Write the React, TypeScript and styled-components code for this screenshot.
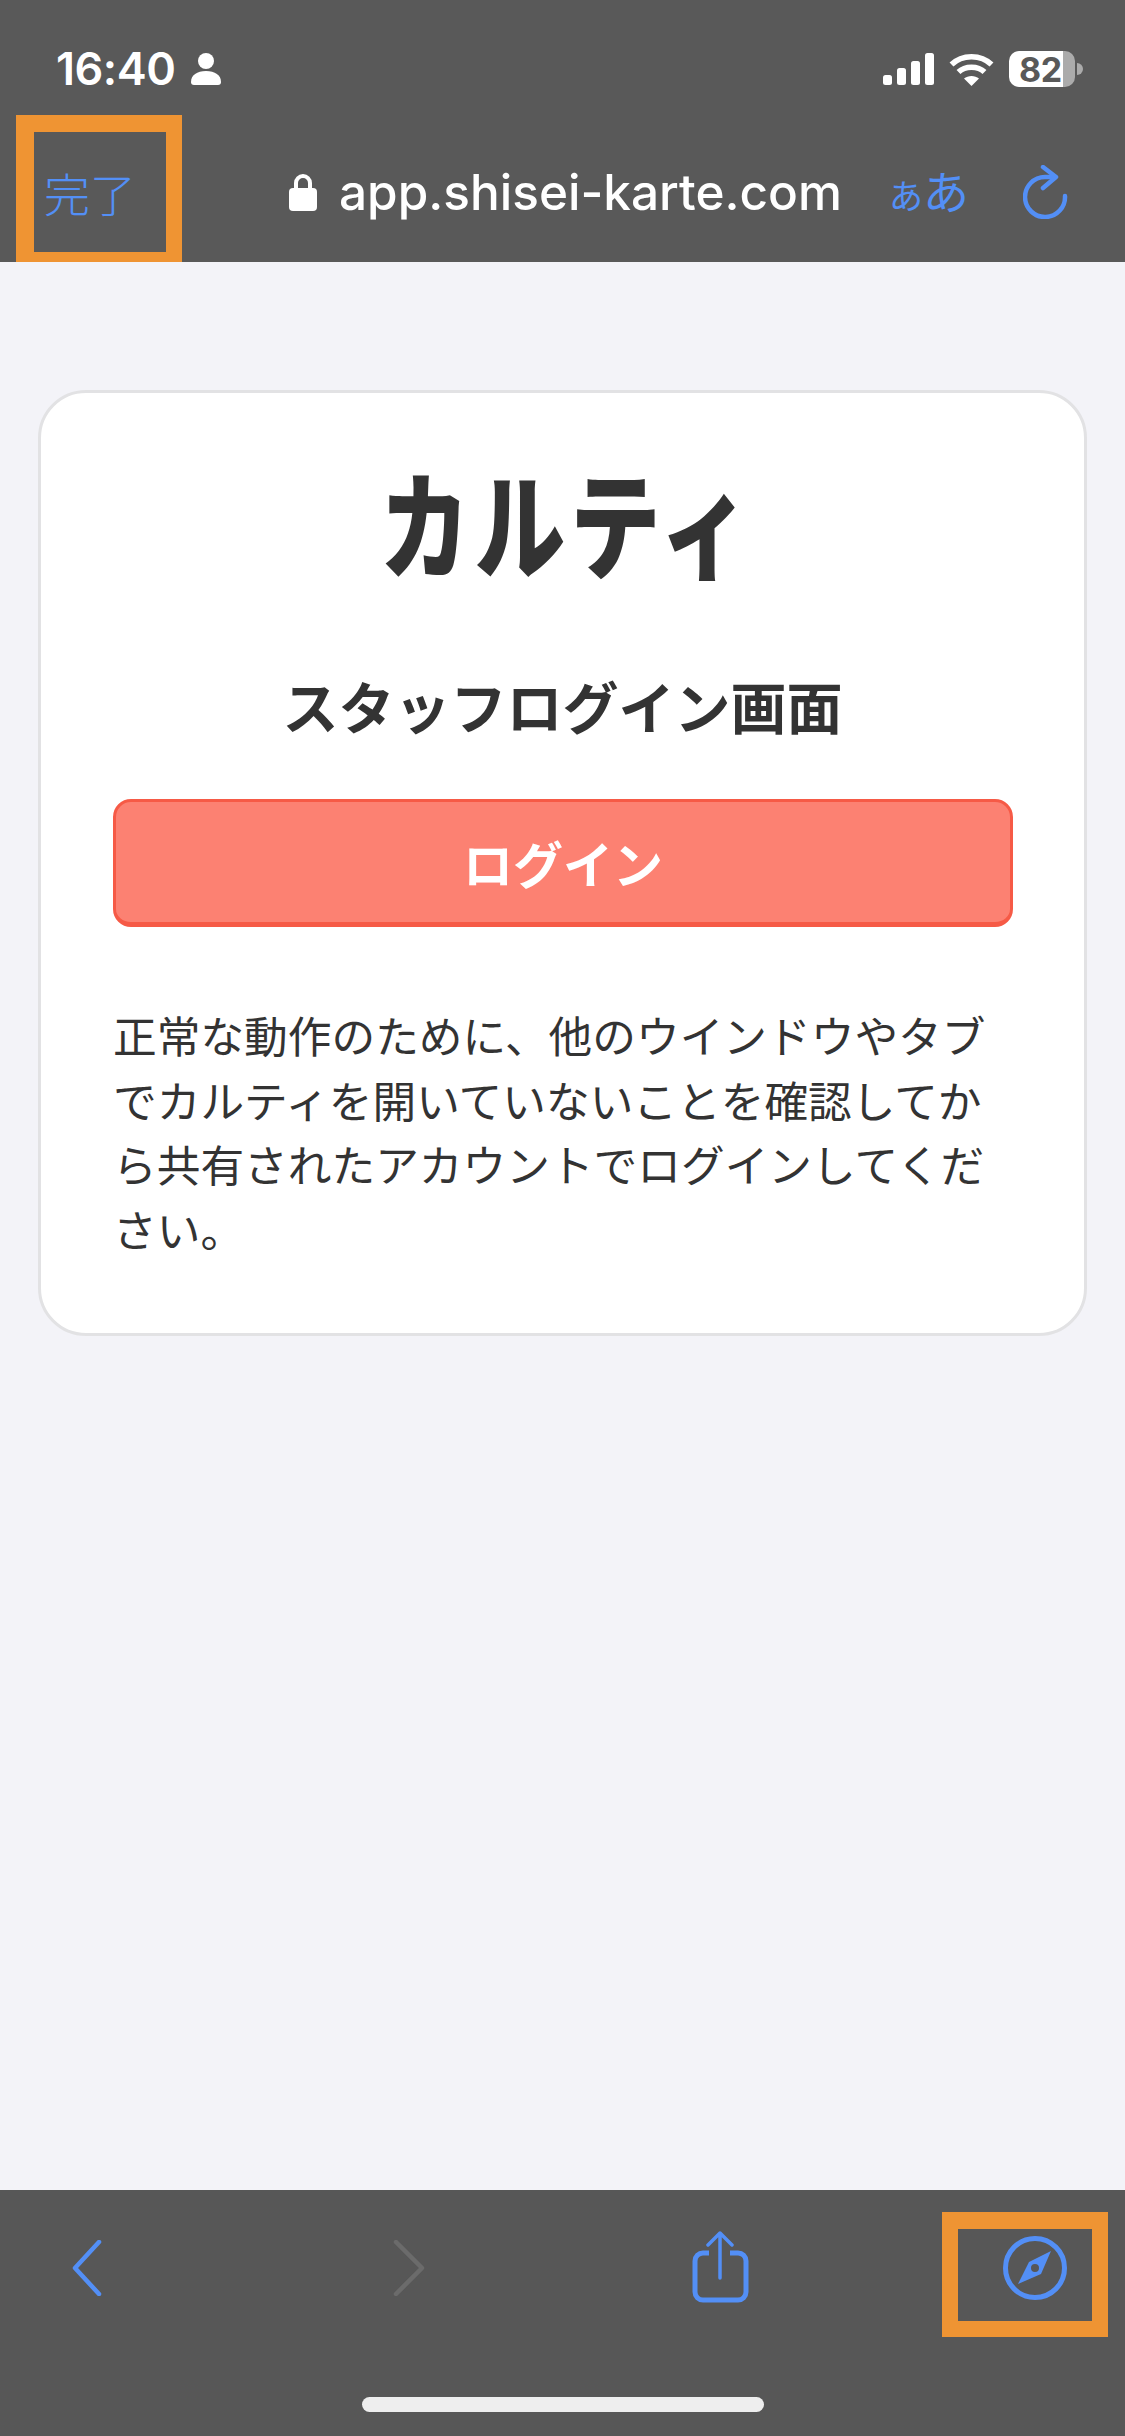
import React from "react";
import styled, { createGlobalStyle } from "styled-components";

const Global = createGlobalStyle`
  html, body { margin: 0; padding: 0; background: #f3f3f8; }
  * { box-sizing: border-box; }
`;

const JP = `"Noto Sans CJK JP", "Noto Sans", sans-serif`;
const UI = `Inter, "Noto Sans CJK JP", sans-serif`;
const BLUE = "#538ff6";

const Page = styled.div`
  width: 1125px;
  height: 2436px;
  display: flex;
  flex-direction: column;
  background: #f3f3f8;
  font-family: ${JP};
  overflow: hidden;
`;

const Header = styled.header`
  position: relative;
  height: 262px;
  flex: none;
  background: #595959;
  padding-top: 51px;
`;

const StatusRow = styled.div`
  height: 36px;
  display: flex;
  align-items: center;
  justify-content: space-between;
  padding: 0 50px 0 56px;
`;

const StatusLeft = styled.div`
  display: flex;
  align-items: center;
  gap: 16px;
`;

const Time = styled.span`
  font-family: ${UI};
  font-size: 45px;
  font-weight: 600;
  line-height: 36px;
  letter-spacing: -0.5px;
  color: #fff;
`;

const StatusRight = styled.div`
  display: flex;
  align-items: center;
  gap: 15px;
`;

const Battery = styled.div`
  position: relative;
  width: 66px;
  height: 36px;
  border-radius: 10px;
  background: linear-gradient(90deg, #fff 0 82%, #ababab 82% 100%);
  display: flex;
  align-items: center;
  padding-left: 10px;
  font-family: ${UI};
  font-size: 34px;
  font-weight: 700;
  letter-spacing: -0.5px;
  color: #595959;
  &::after {
    content: "";
    position: absolute;
    left: 68px;
    top: 12px;
    width: 6px;
    height: 12px;
    border-radius: 0 6px 6px 0;
    background: #ababab;
  }
`;

const NavRow = styled.div`
  margin-top: 75px;
  height: 54px;
  display: grid;
  grid-template-columns: 245px 603px 131px 44px;
  align-items: center;
  padding-left: 44px;
`;

const DoneLabel = styled.span`
  font-size: 46px;
  font-weight: 300;
  line-height: 54px;
  color: ${BLUE};
`;

const Address = styled.div`
  display: flex;
  align-items: center;
  gap: 22px;
`;

const Url = styled.span`
  font-family: ${UI};
  font-size: 49.5px;
  font-weight: 500;
  line-height: 54px;
  color: #fff;
`;

const ReaderLabel = styled.span`
  display: flex;
  align-items: baseline;
  margin-left: -3px;
  color: ${BLUE};
  font-weight: 400;
  line-height: 54px;
`;

const ReaderSmall = styled.span`
  font-size: 34px;
`;

const ReaderLarge = styled.span`
  font-size: 46px;
`;

const Highlight = styled.div<{ $top: number; $left: number; $w: number; $h: number; $b: string }>`
  position: absolute;
  top: ${(p) => p.$top}px;
  left: ${(p) => p.$left}px;
  width: ${(p) => p.$w}px;
  height: ${(p) => p.$h}px;
  border-style: solid;
  border-color: #ef9433;
  border-width: ${(p) => p.$b};
`;

const Main = styled.main`
  flex: 1;
  padding: 128px 38px 0 38px;
`;

const Card = styled.section`
  height: 946px;
  background: #fff;
  border: 3px solid #e2e2e4;
  border-radius: 48px;
  padding: 0 72px;
  color: #333;
`;

const Logo = styled.h1`
  margin: 53px 0 0;
  height: 146px;
  padding-left: 12px;
  font-size: 116px;
  font-weight: 900;
  line-height: 146px;
  letter-spacing: 6px;
  text-align: center;
  transform: scaleX(0.78);
`;

const Subtitle = styled.h2`
  margin: 73px 0 0;
  height: 80px;
  font-size: 56px;
  font-weight: 700;
  line-height: 80px;
  text-align: center;
`;

const LoginButton = styled.button`
  display: block;
  width: 900px;
  height: 128px;
  margin: 54px 0 0;
  padding: 0;
  background: #fc8172;
  border: 3px solid #f65a46;
  border-bottom-width: 5px;
  border-radius: 18px;
  color: #fff;
  font-family: ${JP};
  font-size: 50px;
  font-weight: 700;
`;

const Notice = styled.p`
  margin: 75px 0 0;
  font-size: 43.7px;
  font-weight: 400;
  line-height: 64.6px;
`;

const Toolbar = styled.footer`
  height: 246px;
  flex: none;
  background: #575757;
  position: relative;
  padding-top: 40px;
`;

const ToolRow = styled.div`
  height: 76px;
  display: grid;
  grid-template-columns: 321px 299px 311px 64px;
  align-items: center;
  padding-left: 72px;
`;

const HomeIndicator = styled.div`
  width: 402px;
  height: 15px;
  margin: 91px auto 0;
  border-radius: 8px;
  background: #eee;
`;

const PersonIcon = () => (
  <svg width="30" height="32" viewBox="0 0 30 32" fill="#fff">
    <ellipse cx="15" cy="8" rx="8" ry="8" />
    <path d="M0 29c0-7 6-11 15-11s15 4 15 11c0 2-1 3-3 3H3c-2 0-3-1-3-3z" />
  </svg>
);

const SignalIcon = () => (
  <svg width="51" height="32" viewBox="0 0 51 32" fill="#fff">
    <rect x="0" y="22" width="9" height="10" rx="2.5" />
    <rect x="14" y="15" width="9" height="17" rx="2.5" />
    <rect x="28" y="8" width="9" height="24" rx="2.5" />
    <rect x="42" y="0" width="9" height="32" rx="2.5" />
  </svg>
);

const WifiIcon = () => (
  <svg width="45" height="33" viewBox="0 0 45 33" fill="none" stroke="#fff" strokeWidth="5.5">
    <path d="M2.5 11.5C13 1 32 1 42.5 11.5" />
    <path d="M9.5 19C16 12.5 29 12.5 35.5 19" />
    <path d="M22.5 33L15 25.5C19 22 26 22 30 25.5Z" fill="#fff" stroke="none" />
  </svg>
);

const LockIcon = () => (
  <svg width="28" height="38" viewBox="0 0 28 38">
    <path d="M7 16V10a7 7 0 0 1 14 0v6" fill="none" stroke="#fff" strokeWidth="4" />
    <rect x="0" y="15" width="28" height="23" rx="4" fill="#fff" />
  </svg>
);

const ReloadIcon = () => (
  <svg width="46" height="54" viewBox="0 0 46 54" fill="none" stroke={BLUE} strokeWidth="4.5" strokeLinecap="round" strokeLinejoin="round">
    <path d="M32 12H22A20 20 0 1 0 42 31" />
    <path d="M20 2L33 12L20 23" />
  </svg>
);

const BackIcon = ({ color }: { color: string }) => (
  <svg width="30" height="56" viewBox="0 0 30 56" fill="none" stroke={color} strokeWidth="4.5" strokeLinecap="round" strokeLinejoin="round">
    <path d="M27 2L3 28L27 54" />
  </svg>
);

const ForwardIcon = ({ color }: { color: string }) => (
  <svg width="32" height="56" viewBox="0 0 32 56" fill="none" stroke={color} strokeWidth="4.5" strokeLinecap="round" strokeLinejoin="round">
    <path d="M3 2L29 28L3 54" />
  </svg>
);

const ShareIcon = () => (
  <svg width="57" height="74" viewBox="0 0 57 74" fill="none" stroke={BLUE} strokeLinecap="round" strokeLinejoin="round">
    <path d="M17 22H11a8 8 0 0 0-8 8v31a8 8 0 0 0 8 8h35a8 8 0 0 0 8-8V30a8 8 0 0 0-8-8h-8" strokeWidth="5" strokeLinecap="butt" />
    <path d="M28 47V2M16 14L28 2L40 14" strokeWidth="3.5" />
  </svg>
);

const CompassIcon = () => (
  <svg width="64" height="66" viewBox="0 0 64 66" fill="none">
    <circle cx="32" cy="33" r="29.5" stroke={BLUE} strokeWidth="5" />
    <path fillRule="evenodd" fill={BLUE} d="M48 16L38 39L15 49L26 27ZM32 29a4 4 0 1 0 0 8a4 4 0 1 0 0-8Z" />
  </svg>
);

export default function App() {
  return (
    <Page>
      <Global />
      <Header>
        <StatusRow>
          <StatusLeft>
            <Time>16:40</Time>
            <PersonIcon />
          </StatusLeft>
          <StatusRight>
            <SignalIcon />
            <WifiIcon />
            <Battery>82</Battery>
          </StatusRight>
        </StatusRow>
        <NavRow>
          <DoneLabel>完了</DoneLabel>
          <Address>
            <LockIcon />
            <Url>app.shisei-karte.com</Url>
          </Address>
          <ReaderLabel>
            <ReaderSmall>あ</ReaderSmall>
            <ReaderLarge>あ</ReaderLarge>
          </ReaderLabel>
          <ReloadIcon />
        </NavRow>
        <Highlight $top={115} $left={16} $w={166} $h={147} $b="17px 16px 10px 18px" />
      </Header>
      <Main>
        <Card>
          <Logo>カルティ</Logo>
          <Subtitle>スタッフログイン画面</Subtitle>
          <LoginButton>ログイン</LoginButton>
          <Notice>
            正常な動作のために、他のウインドウやタブでカルティを開いていないことを確認してから共有されたアカウントでログインしてください。
          </Notice>
        </Card>
      </Main>
      <Toolbar>
        <ToolRow>
          <BackIcon color={BLUE} />
          <ForwardIcon color="#6b6b6b" />
          <ShareIcon />
          <CompassIcon />
        </ToolRow>
        <HomeIndicator />
        <Highlight $top={22} $left={942} $w={166} $h={125} $b="17px 16px 16px 16px" />
      </Toolbar>
    </Page>
  );
}
